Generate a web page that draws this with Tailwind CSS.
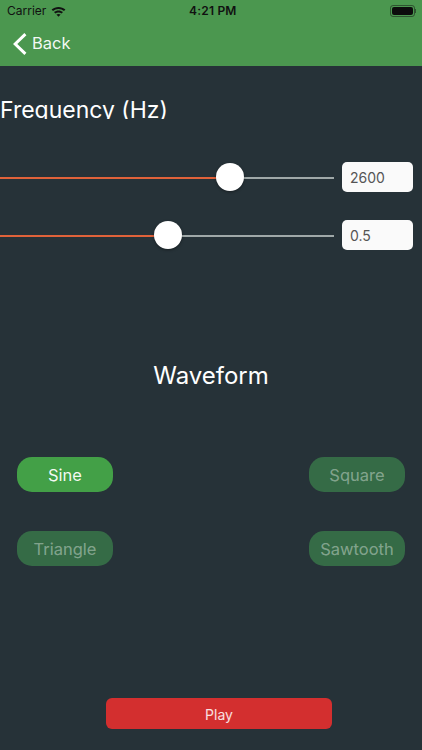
<!DOCTYPE html>
<html><head><meta charset="utf-8"><script src="https://cdn.jsdelivr.net/npm/@tailwindcss/browser@4"></script></head>
<body class="m-0">
<div class="w-[422px] h-[750px] overflow-hidden bg-[#263238] flex flex-col font-['Inter',sans-serif] text-white">
  <header class="h-[66px] shrink-0 bg-[#4b974f] flex flex-col">
    <div class="relative h-[22px] flex items-center pl-[7px] pr-[6px] text-[#111] text-[12px]">
      <span class="font-['Inter']">Carrier</span>
      <svg class="ml-[5px]" width="15" height="11" viewBox="0 0 15 11"><path d="M0.6 3.6C4.4 0 10.6 0 14.4 3.6L13 5.1C10 2.3 5 2.3 2 5.1Z M3 6.1C5.5 3.9 9.5 3.9 12 6.1L10.6 7.6C9 6.2 6 6.2 4.4 7.6Z M5.4 8.6C6.6 7.7 8.4 7.7 9.6 8.6L7.5 10.8Z" fill="#111"/></svg>
      <span class="absolute left-[189px] font-semibold text-[12px] tracking-[0.2px]">4:21 PM</span>
      <div class="ml-auto flex items-center">
        <div class="w-[25px] h-[12px] rounded-[3px] border border-[#111]/50 p-[1px]"><div class="w-full h-full rounded-[2px] bg-[#0c0c0c]"></div></div>
        <div class="w-[1px] h-[4px] bg-[#111]/50"></div>
      </div>
    </div>
    <div class="h-[44px] flex items-center pl-[13px] gap-[5px] pb-[1px]">
      <svg width="14" height="22" viewBox="0 0 14 22"><path d="M12.4 1.2L2.2 11L12.4 20.8" fill="none" stroke="#fff" stroke-width="3"/></svg>
      <span class="text-[16.5px] text-white/95">Back</span>
    </div>
  </header>
  <main class="flex-1 flex flex-col">
    <div class="mt-[30px] h-[23px] overflow-hidden text-[23px] leading-[28px]">Frequency (Hz)</div>
    <div class="mt-[43px] h-[30px] flex items-center pr-[9px] gap-[8px]">
      <div class="relative flex-1 h-[2px] mt-[2px] bg-[#9fa8a8]">
        <div class="h-full w-[230px] bg-[#e0623a]"></div>
        <div class="absolute left-[216px] top-[-14px] w-[28px] h-[28px] rounded-full bg-white shadow-[0_1px_3px_rgba(0,0,0,0.4)]"></div>
      </div>
      <div class="w-[71px] h-[30px] rounded-[5px] bg-[#fafafa] text-[#555] text-[14px] flex items-center pl-[8px]">2600</div>
    </div>
    <div class="mt-[28px] h-[30px] flex items-center pr-[9px] gap-[8px]">
      <div class="relative flex-1 h-[2px] mt-[2px] bg-[#9fa8a8]">
        <div class="h-full w-[168px] bg-[#e0623a]"></div>
        <div class="absolute left-[154px] top-[-14px] w-[28px] h-[28px] rounded-full bg-white shadow-[0_1px_3px_rgba(0,0,0,0.4)]"></div>
      </div>
      <div class="w-[71px] h-[30px] rounded-[5px] bg-[#fafafa] text-[#555] text-[14px] flex items-center pl-[8px]">0.5</div>
    </div>
    <div class="mt-[111px] text-center text-[24px] leading-[30px]">Waveform</div>
    <div class="mt-[66px] px-[17px] grid grid-cols-[96px_96px] justify-between gap-y-[39px] text-[16.5px]">
      <div class="h-[35px] pt-[1px] rounded-[15px] bg-[#43a047] flex items-center justify-center text-white/95">Sine</div>
      <div class="h-[35px] pt-[1px] rounded-[15px] bg-[#356b46] flex items-center justify-center text-white/40">Square</div>
      <div class="h-[35px] pt-[1px] rounded-[15px] bg-[#356b46] flex items-center justify-center text-white/40">Triangle</div>
      <div class="h-[35px] pt-[1px] rounded-[15px] bg-[#356b46] flex items-center justify-center text-white/40">Sawtooth</div>
    </div>
    <div class="mt-[132px] ml-[106px] w-[226px] h-[31px] pt-[1px] rounded-[6px] bg-[#d32f2f] flex items-center justify-center text-[14px] text-white/85">Play</div>
  </main>
</div>
</body></html>
